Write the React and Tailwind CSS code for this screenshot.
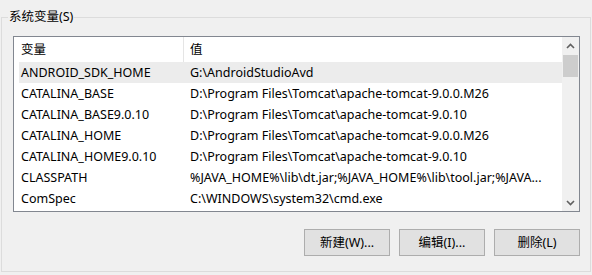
import React from "react";

const rows = [
  ["ANDROID_SDK_HOME", "G:\\AndroidStudioAvd", true],
  ["CATALINA_BASE", "D:\\Program Files\\Tomcat\\apache-tomcat-9.0.0.M26"],
  ["CATALINA_BASE9.0.10", "D:\\Program Files\\Tomcat\\apache-tomcat-9.0.10"],
  ["CATALINA_HOME", "D:\\Program Files\\Tomcat\\apache-tomcat-9.0.0.M26"],
  ["CATALINA_HOME9.0.10", "D:\\Program Files\\Tomcat\\apache-tomcat-9.0.10"],
  ["CLASSPATH", "%JAVA_HOME%\\lib\\dt.jar;%JAVA_HOME%\\lib\\tool.jar;%JAVA..."],
  ["ComSpec", "C:\\WINDOWS\\system32\\cmd.exe"],
];

function Chevron({ up }) {
  return (
    <svg width="9" height="6" viewBox="0 0 9 6">
      <polyline
        points={up ? "1,5 4.5,1.5 8,5" : "1,1 4.5,4.5 8,1"}
        fill="none"
        stroke="#606060"
        strokeWidth="1.6"
      />
    </svg>
  );
}

export default function App() {
  return (
    <div
      className="w-[592px] h-[275px] bg-[#f0f0f0] pt-[9px] px-[1px] text-[12.5px] leading-[16px] text-black overflow-hidden"
      style={{ fontFamily: '"Noto Sans", "Noto Sans CJK SC", sans-serif' }}
    >
      <fieldset className="border border-[#dcdcdc] h-[263px] min-w-0">
        <legend className="ml-[6px] px-[1px] leading-[16px]">系统变量(S)</legend>
        <div className="mt-[11px] ml-[11px] mr-[10px] h-[176px] border border-[#828790] bg-white flex">
          <div className="flex-1 min-w-0">
            <div className="flex h-[25px] items-center">
              <div className="w-[169px] pl-[7px]">变量</div>
              <div className="w-px h-full bg-[#e5e5e5]" />
              <div className="pl-[6px]">值</div>
            </div>
            {rows.map(([k, v, sel]) => (
              <div
                key={k}
                className={
                  "ml-[5px] flex h-[21px] items-center whitespace-nowrap " +
                  (sel ? "bg-[#ececec]" : "")
                }
              >
                <div className="w-[165px] pl-[2px]">{k}</div>
                <div className="pl-[6px]">{v}</div>
              </div>
            ))}
          </div>
          <div className="w-[17px] bg-[#f0f0f0] flex flex-col">
            <div className="h-[17px] flex items-center justify-center">
              <Chevron up />
            </div>
            <div className="mt-px mx-auto w-[15px] h-[22px] bg-[#cdcdcd]" />
            <div className="flex-1" />
            <div className="h-[17px] flex items-center justify-center">
              <Chevron />
            </div>
          </div>
        </div>
        <div className="mt-[17px] mr-[10px] flex justify-end gap-[9px]">
          {["新建(W)...", "编辑(I)...", "删除(L)"].map((t) => (
            <button
              key={t}
              className="w-[86px] h-[27px] border border-[#adadad] bg-[#e1e1e1] flex items-center justify-center"
            >
              {t}
            </button>
          ))}
        </div>
      </fieldset>
    </div>
  );
}
